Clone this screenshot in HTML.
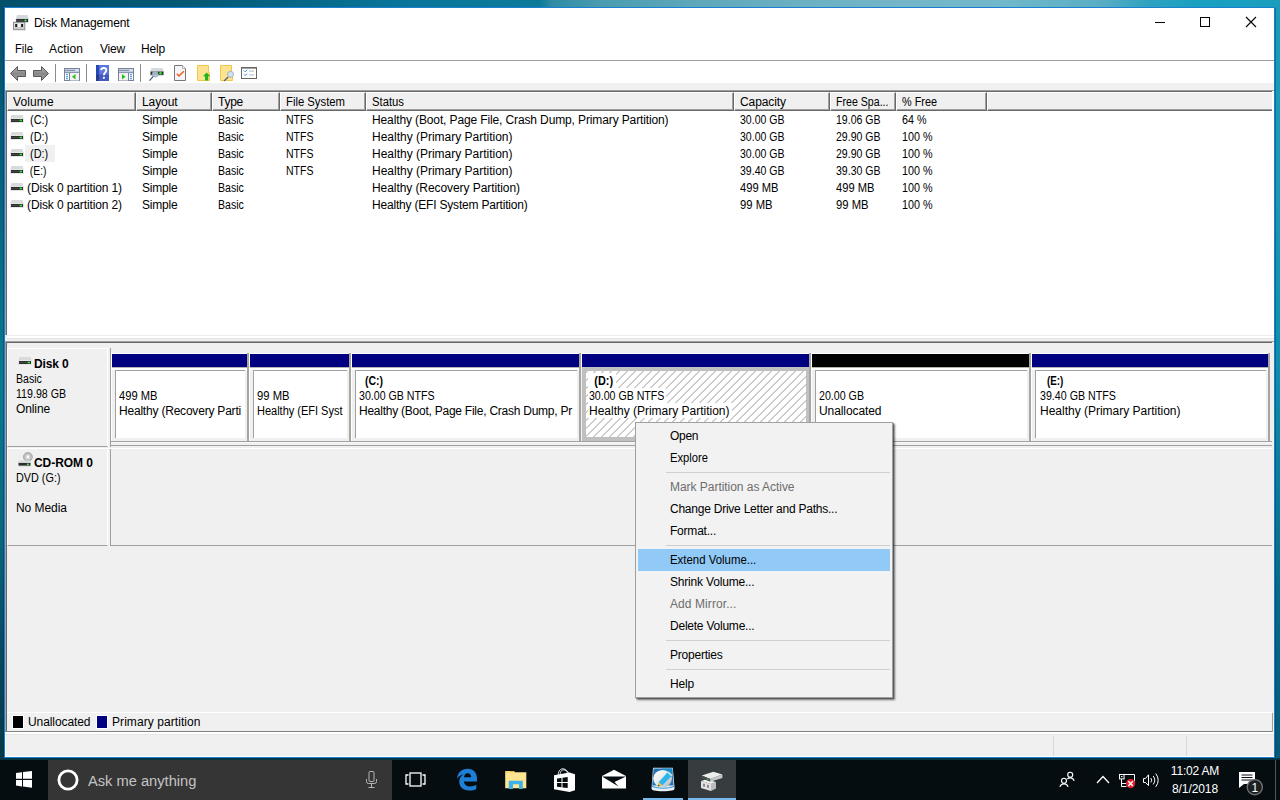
<!DOCTYPE html>
<html>
<head>
<meta charset="utf-8">
<title>Disk Management</title>
<style>
*{box-sizing:border-box;margin:0;padding:0}
html,body{width:1280px;height:800px;overflow:hidden}
body{font-family:"Liberation Sans",sans-serif;font-size:12px;color:#000;position:relative;background:#0a6a86}
.abs{position:absolute}
.t{position:absolute;white-space:nowrap;line-height:17px;height:17px}
#desk{position:absolute;left:0;top:0;width:1280px;height:760px;background:#033642}
#dtop{position:absolute;left:0;top:0;width:1280px;height:8px;background:linear-gradient(90deg,#04506b 0.00%,#055a76 15.62%,#08769a 31.25%,#0a7c9a 42.19%,#2e8ca4 43.12%,#4b9cb0 46.88%,#5ea8ba 54.69%,#6cb0c2 62.50%,#74b6c8 70.31%,#72b8ca 78.12%,#5aaec4 85.94%,#2ea2c0 89.84%,#18a0c0 93.75%,#1a9ebe 100.00%)}
#dleft{position:absolute;left:0;top:7px;width:5px;height:751px;background:linear-gradient(180deg,#05506b 0%,#05607f 20%,#0a7a92 50%,#08687f 70%,#064a66 85%,#043a48 100%)}
#dright{position:absolute;left:1274px;top:7px;width:6px;height:751px;background:linear-gradient(180deg,#1c9cb8 0%,#1a98b5 25%,#1090b0 45%,#0a7a9a 65%,#066888 80%,#045a78 100%)}
#win{position:absolute;left:4px;top:7px;width:1271px;height:751px;background:#fff;border:1px solid #1a7fd0;overflow:hidden}
/* coordinates inside #win are page coords minus (5,8) -> use wrapper */
#w{position:absolute;left:-5px;top:-8px;width:1280px;height:800px}
#menuline{left:5px;top:60px;width:1269px;height:1px;background:#a0a0a0}
#body{left:5px;top:83px;width:1269px;height:674px;background:#f0f0f0}
/* list */
#list{left:5px;top:90px;width:1269px;height:245px;background:#fff;border-top:1px solid #a0a0a0;border-left:1px solid #a0a0a0}
#list2{left:6px;top:91px;width:1266px;height:244px;border-top:1px solid #696969;border-left:1px solid #696969}
.hd{position:absolute;top:92px;height:19px;background:#f0f0f0;border-top:1px solid #fff;border-left:1px solid #fff;border-right:1px solid #696969;border-bottom:1px solid #696969}
.hd i{position:absolute;right:0;bottom:0;left:0;top:0;border-right:1px solid #a0a0a0;border-bottom:1px solid #a0a0a0}
.hd span{position:absolute;left:5px;top:1px;line-height:17px;white-space:nowrap}

/* graphic pane */
#gp{left:5px;top:341px;width:1269px;height:391px;background:#f0f0f0;border-top:1px solid #a0a0a0;border-left:1px solid #a0a0a0}
#gp2{left:6px;top:342px;width:1266px;height:390px;border-top:1px solid #696969;border-left:1px solid #696969}
.lbl{position:absolute;left:7px;width:101px;background:#f0f0f0;border-top:1px solid #fff;border-left:1px solid #fff;border-right:1px solid #fff;border-bottom:1px solid #a0a0a0}
.b{font-weight:bold}
.pb{position:absolute;top:354px;height:13px;background:#000080;box-shadow:-1px -1px 0 0 #fff}
.pc{position:absolute;top:367px;height:74px;background:#f0f0f0;border-top:1px solid #b4b4ac;box-shadow:-1px 0 0 0 #fff}
.pc:before{content:"";position:absolute;left:0;right:0;top:0;height:2px;background:#fff}
.pc i{position:absolute;left:3px;top:2px;right:2px;bottom:3px;background:#fff;border-top:1px solid #a0a0a0;border-left:1px solid #a0a0a0}
.pv{position:absolute;top:353px;width:2px;height:88px;background:#a6a69e}

/* context menu */
#cm{position:absolute;left:635px;top:422px;width:258px;height:276px;background:#f2f2f2;border:1px solid #a0a0a0;box-shadow:2px 2px 2px rgba(0,0,0,.5),1px 1px 1px rgba(0,0,0,.3)}
.mi{position:absolute;left:670px;white-space:nowrap;height:22px;line-height:22px}
.mi.d{color:#6d6d6d}
.ms{position:absolute;left:666px;width:224px;height:1px;background:#d0d0d0}
#mh{position:absolute;left:638px;top:549px;width:252px;height:22px;background:#91c9f7}
/* taskbar */
#gfx .t{margin-top:1px}
#task .tx{position:absolute;color:#fff;white-space:nowrap;font-size:12px;line-height:14px}

#task{left:0;top:760px;width:1280px;height:40px;background:#050d11}
</style>
</head>
<body>
<svg width="0" height="0" style="position:absolute">
<defs>
<g id="dk"><path d="M1.5 0H12.5L13.5 3.5H0.5Z" fill="#d9dadb"/><rect x="0" y="3" width="14" height="5" fill="#e4e5e6"/><rect x="1" y="4" width="12" height="3" fill="#2e2e2e"/><rect x="1" y="5" width="8" height="1" fill="#444"/><rect x="9.6" y="4.6" width="2.4" height="1.8" fill="#2fe02f"/></g>
</defs></svg>
<div id="desk"><div id="dtop"></div><div id="dleft"></div><div id="dright"></div><div class="abs" style="left:1275px;top:8px;width:1px;height:750px;background:rgba(0,40,60,.35)"></div><div class="abs" style="left:3px;top:8px;width:1px;height:750px;background:rgba(0,30,50,.3)"></div></div>
<div id="win"><div id="w">


<!-- title icon -->
<svg class="abs" style="left:13px;top:15px" width="16" height="16" viewBox="0 0 16 16"><path d="M4 0H14.5L15.5 4H3Z" fill="#d3d8dd"/><rect x="2.7" y="3.6" width="12.8" height="4" fill="#c4c8cc"/><rect x="3.2" y="4" width="11.8" height="3" fill="#2a2c2e"/><rect x="3.2" y="5" width="7" height="1" fill="#484a4c"/><circle cx="12.5" cy="5.5" r="1.1" fill="#4cff4c"/><rect x="0.5" y="7.3" width="11.3" height="7.4" fill="#dedfe0" stroke="#8c8c8c" stroke-width="1"/><rect x="1.5" y="12" width="9.3" height="2" fill="#c8c9ca"/><rect x="2.2" y="9" width="2" height="3" fill="#1c1c1c"/><rect x="8.1" y="9" width="2" height="3" fill="#1c1c1c"/><rect x="5" y="9" width="2.2" height="3" fill="#f4f4f4"/></svg>
<!-- window controls -->
<svg class="abs" style="left:1150px;top:8px" width="120" height="30" viewBox="0 0 120 30" shape-rendering="crispEdges"><path d="M5 14.5H15" stroke="#000" stroke-width="1"/><rect x="50.5" y="9.5" width="9" height="9" fill="none" stroke="#000" stroke-width="1"/><path d="M96 9L106 19M106 9L96 19" stroke="#000" stroke-width="1.1" shape-rendering="auto"/></svg>
<!-- toolbar -->
<svg class="abs" style="left:5px;top:61px" width="260" height="22" viewBox="0 0 260 22">
<defs><linearGradient id="ag" x1="0" y1="0" x2="0" y2="1"><stop offset="0" stop-color="#b4b4b4"/><stop offset=".5" stop-color="#8a8a8a"/><stop offset="1" stop-color="#9c9c9c"/></linearGradient></defs>
<path d="M5.5 12.5L12.5 5.5V9.5H20.5V15.5H12.5V19.5Z" fill="url(#ag)" stroke="#585858" stroke-width="1" stroke-linejoin="round"/>
<path d="M43.5 12.5L36.5 5.5V9.5H28.5V15.5H36.5V19.5Z" fill="url(#ag)" stroke="#585858" stroke-width="1" stroke-linejoin="round"/>
<rect x="50" y="3" width="1" height="18" fill="#8c8c8c"/>
<rect x="81" y="3" width="1" height="18" fill="#8c8c8c"/>
<rect x="135" y="3" width="1" height="18" fill="#8c8c8c"/>
<!-- icon3 -->
<g transform="translate(59,7)"><rect x=".5" y=".5" width="15" height="12" fill="#fff" stroke="#76849c"/><rect x="1" y="1" width="14" height="3.4" fill="#c3cddd"/><rect x="1" y="2" width="10" height="1" fill="#8794ab"/><rect x="11.7" y="1.4" width="1" height="1.2" fill="#fff"/><rect x="13.5" y="1.4" width="1" height="1.2" fill="#fff"/><rect x="1" y="4.2" width="14" height="1" fill="#76849c"/><rect x="5" y="5" width="1" height="7.5" fill="#76849c"/><rect x="2" y="6.2" width="2" height="1" fill="#2f8be6"/><rect x="2" y="8.2" width="2" height="1" fill="#2f8be6"/><rect x="2" y="10.2" width="2" height="1" fill="#2f8be6"/><rect x="6" y="5.2" width="9" height="7.3" fill="#f2f2f2"/><path d="M11.5 6L8 8.8L11.5 11.6Z" fill="#2dbb1e"/></g>
<!-- help -->
<g transform="translate(91,4)"><rect x="0" y="0" width="13" height="16" fill="#5a76e0"/><rect x="0" y="0" width="3" height="16" fill="#2b48b8"/><rect x="0" y="9.5" width="13" height="6.5" fill="#3c52b4" opacity=".75"/><rect x="0" y="9.5" width="3" height="6.5" fill="#263c8c"/><path d="M5.2 5.2C5.2 2.2 10.3 2.2 10.3 5.2C10.3 7.2 7.9 7.5 7.9 10.2" fill="none" stroke="#fff" stroke-width="1.9"/><circle cx="7.9" cy="12.8" r="1.15" fill="#fff"/></g>
<!-- icon5 -->
<g transform="translate(113,7)"><rect x=".5" y=".5" width="15" height="12" fill="#fff" stroke="#76849c"/><rect x="1" y="1" width="14" height="3.4" fill="#c3cddd"/><rect x="1" y="2" width="10" height="1" fill="#8794ab"/><rect x="11.7" y="1.4" width="1" height="1.2" fill="#fff"/><rect x="13.5" y="1.4" width="1" height="1.2" fill="#fff"/><rect x="1" y="4.2" width="14" height="1" fill="#76849c"/><rect x="10" y="5" width="1" height="7.5" fill="#76849c"/><rect x="12" y="6.2" width="2" height="1" fill="#2f8be6"/><rect x="12" y="8.2" width="2" height="1" fill="#2f8be6"/><rect x="12" y="10.2" width="2" height="1" fill="#2f8be6"/><rect x="1" y="5.2" width="9" height="7.3" fill="#f2f2f2"/><path d="M4 6L7.5 8.8L4 11.6Z" fill="#2dbb1e"/></g>
<!-- icon6 disk+magnifier -->
<g transform="translate(144,7)"><path d="M2.5 0H13.5L14.5 3H1.5Z" fill="#d6dadd"/><rect x="1" y="2.8" width="14" height="5" fill="#d0d3d6"/><rect x="1.6" y="3.6" width="12.8" height="3.2" fill="#2a2c2e"/><rect x="10" y="4.5" width="3" height="1.4" fill="#2ee62e"/><rect x="11" y="3.9" width="1" height="2.6" fill="#2ee62e"/><circle cx="6.2" cy="6.2" r="2.9" fill="#aac4d4" fill-opacity=".9" stroke="#9aa8b2" stroke-width=".8"/><path d="M4.3 8.3L.5 12.6" stroke="#4a5878" stroke-width="1.2"/></g>
<!-- icon7 doc check -->
<g transform="translate(169,4)"><path d="M.5 .5H8.5L11.5 3.5V15.5H.5Z" fill="#f5f6fa" stroke="#787878"/><path d="M8.5 .5V3.5H11.5" fill="#fff" stroke="#9a9a9a" stroke-width=".8"/><path d="M2.8 8.8L5 11L9.8 6.2" fill="none" stroke="#f05a1e" stroke-width="1.5"/></g>
<!-- icon8 folder up -->
<g transform="translate(192,4)"><path d="M.5 .5H11.5V8H12.5V15.5H.5Z" fill="#fde291" stroke="#f1c84c"/><path d="M9.6 7.5L13.2 11.2H11.2V15.6H8V11.2H6Z" fill="#1fb51f"/></g>
<!-- icon9 folder search -->
<g transform="translate(215,4)"><path d="M.5 .5H11.5V8H12.5V15.5H.5Z" fill="#fde291" stroke="#f1c84c"/><path d="M8.2 12L4 16" stroke="#55607a" stroke-width="1.3"/><circle cx="10.5" cy="9.3" r="3" fill="#cfe2ee" stroke="#a0acb6" stroke-width=".9"/></g>
<!-- icon10 checklist -->
<g transform="translate(236,6)"><rect x=".5" y=".5" width="15" height="11" fill="#fff" stroke="#666"/><rect x="0" y="0" width="16" height="1.6" fill="#666"/><path d="M3 3.6L4.2 4.8L6 2.8M3 7.4L4.2 8.6L6 6.6" fill="none" stroke="#2f8be6" stroke-width="1"/><rect x="8" y="3.6" width="5" height="1" fill="#b4b8be"/><rect x="8" y="7.4" width="5" height="1" fill="#b4b8be"/></g>
</svg>
<!-- title -->
<div class="t" style="letter-spacing:-0.075px;left:34px;top:15px">Disk Management</div>
<!-- menu -->
<div class="t" style="transform:scaleX(0.9254);transform-origin:0 0;left:15px;top:41px">File</div>
<div class="t" style="letter-spacing:0.123px;left:49px;top:41px">Action</div>
<div class="t" style="letter-spacing:-0.199px;left:100px;top:41px">View</div>
<div class="t" style="letter-spacing:-0.147px;left:141px;top:41px">Help</div>
<div class="abs" id="menuline"></div>
<div class="abs" id="body"></div>

<!-- list -->
<div class="abs" id="list"></div>
<div class="abs" id="list2"></div>
<div class="abs" style="left:7px;top:335px;width:1267px;height:1px;background:#ececec"></div>
<div class="abs" style="left:7px;top:336px;width:1267px;height:2px;background:#fff"></div>
<div class="abs" style="left:7px;top:338px;width:1267px;height:1px;background:#e3e3e3"></div>
<div class="abs" style="left:7px;top:343px;width:1265px;height:1px;background:#fff"></div>
<div id="hdrs">
<div class="hd" style="left:7px;width:129px"><i></i><span style="letter-spacing:0.12px;">Volume</span></div>
<div class="hd" style="left:136px;width:76px"><i></i><span style="letter-spacing:-0.089px;">Layout</span></div>
<div class="hd" style="left:212px;width:68px"><i></i><span style="letter-spacing:-0.254px;">Type</span></div>
<div class="hd" style="left:280px;width:86px"><i></i><span style="transform:scaleX(0.9412);transform-origin:0 0;">File System</span></div>
<div class="hd" style="left:366px;width:368px"><i></i><span style="transform:scaleX(0.9403);transform-origin:0 0;">Status</span></div>
<div class="hd" style="left:734px;width:96px"><i></i><span style="letter-spacing:-0.086px;">Capacity</span></div>
<div class="hd" style="left:830px;width:66px"><i></i><span style="transform:scaleX(0.8842);transform-origin:0 0;">Free Spa...</span></div>
<div class="hd" style="left:896px;width:91px"><i></i><span style="transform:scaleX(0.9047);transform-origin:0 0;">% Free</span></div>
<div class="hd" style="left:987px;width:285px;border-right:none"><i style="border-right:none"></i></div>
</div>
<div id="rows">
<svg class="abs dk" style="left:10px;top:115px" width="14" height="8" viewBox="0 0 14 8"><use href="#dk"/></svg>
<div class="t" style="transform:scaleX(0.9088);transform-origin:0 0;left:27px;top:112px">&nbsp;(C:)</div>
<div class="t" style="letter-spacing:-0.198px;left:142px;top:112px">Simple</div>
<div class="t" style="transform:scaleX(0.8775);transform-origin:0 0;left:218px;top:112px">Basic</div>
<div class="t" style="transform:scaleX(0.8774);transform-origin:0 0;left:286px;top:112px">NTFS</div>
<div class="t" style="letter-spacing:-0.124px;left:372px;top:112px">Healthy (Boot, Page File, Crash Dump, Primary Partition)</div>
<div class="t" style="transform:scaleX(0.8777);transform-origin:0 0;left:740px;top:112px">30.00 GB</div>
<div class="t" style="transform:scaleX(0.8777);transform-origin:0 0;left:836px;top:112px">19.06 GB</div>
<div class="t" style="transform:scaleX(0.8955);transform-origin:0 0;left:902px;top:112px">64 %</div>
<svg class="abs dk" style="left:10px;top:132px" width="14" height="8" viewBox="0 0 14 8"><use href="#dk"/></svg>
<div class="t" style="transform:scaleX(0.9088);transform-origin:0 0;left:27px;top:129px">&nbsp;(D:)</div>
<div class="t" style="letter-spacing:-0.198px;left:142px;top:129px">Simple</div>
<div class="t" style="transform:scaleX(0.8775);transform-origin:0 0;left:218px;top:129px">Basic</div>
<div class="t" style="transform:scaleX(0.8774);transform-origin:0 0;left:286px;top:129px">NTFS</div>
<div class="t" style="letter-spacing:-0.008px;left:372px;top:129px">Healthy (Primary Partition)</div>
<div class="t" style="transform:scaleX(0.8777);transform-origin:0 0;left:740px;top:129px">30.00 GB</div>
<div class="t" style="transform:scaleX(0.8777);transform-origin:0 0;left:836px;top:129px">29.90 GB</div>
<div class="t" style="transform:scaleX(0.8962);transform-origin:0 0;left:902px;top:129px">100 %</div>
<div class="abs" style="left:25px;top:145px;width:30px;height:17px;background:#f0f0f0"></div>
<svg class="abs dk" style="left:10px;top:149px" width="14" height="8" viewBox="0 0 14 8"><use href="#dk"/></svg>
<div class="t" style="transform:scaleX(0.9088);transform-origin:0 0;left:27px;top:146px">&nbsp;(D:)</div>
<div class="t" style="letter-spacing:-0.198px;left:142px;top:146px">Simple</div>
<div class="t" style="transform:scaleX(0.8775);transform-origin:0 0;left:218px;top:146px">Basic</div>
<div class="t" style="transform:scaleX(0.8774);transform-origin:0 0;left:286px;top:146px">NTFS</div>
<div class="t" style="letter-spacing:-0.008px;left:372px;top:146px">Healthy (Primary Partition)</div>
<div class="t" style="transform:scaleX(0.8777);transform-origin:0 0;left:740px;top:146px">30.00 GB</div>
<div class="t" style="transform:scaleX(0.8777);transform-origin:0 0;left:836px;top:146px">29.90 GB</div>
<div class="t" style="transform:scaleX(0.8962);transform-origin:0 0;left:902px;top:146px">100 %</div>
<svg class="abs dk" style="left:10px;top:166px" width="14" height="8" viewBox="0 0 14 8"><use href="#dk"/></svg>
<div class="t" style="transform:scaleX(0.8601);transform-origin:0 0;left:27px;top:163px">&nbsp;(E:)</div>
<div class="t" style="letter-spacing:-0.198px;left:142px;top:163px">Simple</div>
<div class="t" style="transform:scaleX(0.8775);transform-origin:0 0;left:218px;top:163px">Basic</div>
<div class="t" style="transform:scaleX(0.8774);transform-origin:0 0;left:286px;top:163px">NTFS</div>
<div class="t" style="letter-spacing:-0.008px;left:372px;top:163px">Healthy (Primary Partition)</div>
<div class="t" style="transform:scaleX(0.8777);transform-origin:0 0;left:740px;top:163px">39.40 GB</div>
<div class="t" style="transform:scaleX(0.8777);transform-origin:0 0;left:836px;top:163px">39.30 GB</div>
<div class="t" style="transform:scaleX(0.8962);transform-origin:0 0;left:902px;top:163px">100 %</div>
<svg class="abs dk" style="left:10px;top:183px" width="14" height="8" viewBox="0 0 14 8"><use href="#dk"/></svg>
<div class="t" style="letter-spacing:-0.119px;left:27px;top:180px">(Disk 0 partition 1)</div>
<div class="t" style="letter-spacing:-0.198px;left:142px;top:180px">Simple</div>
<div class="t" style="transform:scaleX(0.8775);transform-origin:0 0;left:218px;top:180px">Basic</div>
<div class="t" style="letter-spacing:-0.074px;left:372px;top:180px">Healthy (Recovery Partition)</div>
<div class="t" style="transform:scaleX(0.9309);transform-origin:0 0;left:740px;top:180px">499 MB</div>
<div class="t" style="transform:scaleX(0.9309);transform-origin:0 0;left:836px;top:180px">499 MB</div>
<div class="t" style="transform:scaleX(0.8962);transform-origin:0 0;left:902px;top:180px">100 %</div>
<svg class="abs dk" style="left:10px;top:200px" width="14" height="8" viewBox="0 0 14 8"><use href="#dk"/></svg>
<div class="t" style="letter-spacing:-0.119px;left:27px;top:197px">(Disk 0 partition 2)</div>
<div class="t" style="letter-spacing:-0.198px;left:142px;top:197px">Simple</div>
<div class="t" style="transform:scaleX(0.8775);transform-origin:0 0;left:218px;top:197px">Basic</div>
<div class="t" style="letter-spacing:-0.196px;left:372px;top:197px">Healthy (EFI System Partition)</div>
<div class="t" style="transform:scaleX(0.9369);transform-origin:0 0;left:740px;top:197px">99 MB</div>
<div class="t" style="transform:scaleX(0.9369);transform-origin:0 0;left:836px;top:197px">99 MB</div>
<div class="t" style="transform:scaleX(0.8962);transform-origin:0 0;left:902px;top:197px">100 %</div>
</div>

<!-- graphic -->
<div id="gfx">
<div class="abs" id="gp"></div><div class="abs" id="gp2"></div>
<div class="lbl" style="top:348px;height:99px"></div>
<svg class="abs" style="left:18px;top:357px" width="14" height="8" viewBox="0 0 14 8"><use href="#dk"/></svg>
<div class="t b" style="letter-spacing:-0.143px;left:34px;top:355px">Disk 0</div>
<div class="t" style="transform:scaleX(0.8775);transform-origin:0 0;left:16px;top:370px">Basic</div>
<div class="t" style="transform:scaleX(0.8852);transform-origin:0 0;left:16px;top:385px">119.98 GB</div>
<div class="t" style="letter-spacing:-0.115px;left:16px;top:400px">Online</div>
<div class="abs" style="left:110px;top:348px;width:1px;height:99px;background:#a0a0a0"></div>
<div class="abs" style="left:110px;top:441px;width:1162px;height:1px;background:#a0a0a0"></div>
<div class="abs" style="left:111px;top:442px;width:1161px;height:1px;background:#f8f8f8"></div>
<div class="abs" style="left:110px;top:445px;width:1162px;height:1px;background:#a0a0a0"></div>
<div class="pb" style="left:112px;width:135px;background:#000080"></div><div class="pv" style="left:247px"></div>
<div class="pc" style="left:112px;width:135px"><i></i></div>
<div class="t" style="transform:scaleX(0.9309);transform-origin:0 0;left:119px;top:387px">499 MB</div>
<div class="t" style="letter-spacing:-0.205px;left:119px;top:402px">Healthy (Recovery Parti</div>
<div class="pb" style="left:250px;width:99px;background:#000080"></div><div class="pv" style="left:349px"></div>
<div class="pc" style="left:250px;width:99px"><i></i></div>
<div class="t" style="transform:scaleX(0.9369);transform-origin:0 0;left:257px;top:387px">99 MB</div>
<div class="t" style="transform:scaleX(0.9158);transform-origin:0 0;left:257px;top:402px">Healthy (EFI Syst</div>
<div class="pb" style="left:352px;width:227px;background:#000080"></div><div class="pv" style="left:579px"></div>
<div class="pc" style="left:352px;width:227px"><i></i></div>
<div class="t b" style="transform:scaleX(0.8714);transform-origin:0 0;left:365px;top:372px">(C:)</div>
<div class="t" style="transform:scaleX(0.8843);transform-origin:0 0;left:359px;top:387px">30.00 GB NTFS</div>
<div class="t" style="letter-spacing:-0.244px;left:359px;top:402px">Healthy (Boot, Page File, Crash Dump, Pr</div>
<div class="pb" style="left:582px;width:227px;background:#000080"></div><div class="pv" style="left:809px"></div>
<div class="abs" style="left:582px;top:367px;width:227px;height:74px;background:#c0c0c0"></div>
<svg class="abs" style="left:586px;top:371px" width="220" height="66"><defs><pattern id="ht" width="8" height="8" patternUnits="userSpaceOnUse" patternTransform="translate(1.5,0)"><rect width="8" height="8" fill="#fff"/><path d="M-1 9L9 -1M-1 1L1 -1M7 9L9 7" stroke="#858585" stroke-width=".85"/></pattern></defs><rect width="100%" height="100%" fill="url(#ht)"/></svg>
<div class="t b" style="transform:scaleX(0.9077);transform-origin:0 0;left:588px;top:372px;background:#fff;padding:0 3px 0 7px;height:15px;line-height:16px">(D:)</div>
<div class="t" style="transform:scaleX(0.8843);transform-origin:0 0;left:588px;top:387px;background:#fff;padding:0 2px 0 1px;height:15px;line-height:16px">30.00 GB NTFS</div>
<div class="t" style="letter-spacing:-0.008px;left:588px;top:402px;background:#fff;padding:0 2px 0 1px;height:15px;line-height:16px">Healthy (Primary Partition)</div>
<div class="pb" style="left:812px;width:217px;background:#000"></div><div class="pv" style="left:1029px"></div>
<div class="pc" style="left:812px;width:217px"><i></i></div>
<div class="t" style="transform:scaleX(0.8875);transform-origin:0 0;left:819px;top:387px">20.00 GB</div>
<div class="t" style="letter-spacing:-0.089px;left:819px;top:402px">Unallocated</div>
<div class="pb" style="left:1032px;width:236px;background:#000080"></div><div class="pv" style="left:1268px"></div>
<div class="pc" style="left:1032px;width:236px"><i></i></div>
<div class="t b" style="transform:scaleX(0.82);transform-origin:0 0;left:1047px;top:372px">(E:)</div>
<div class="t" style="transform:scaleX(0.889);transform-origin:0 0;left:1040px;top:387px">39.40 GB NTFS</div>
<div class="t" style="letter-spacing:-0.008px;left:1040px;top:402px">Healthy (Primary Partition)</div>
<div class="lbl" style="top:448px;height:98px"></div><div class="abs" style="left:110px;top:449px;width:1px;height:97px;background:#a0a0a0"></div>
<div class="abs" style="left:108px;top:448px;width:1164px;height:1px;background:#fff"></div>
<div class="abs" style="left:111px;top:545px;width:1161px;height:1px;background:#a0a0a0"></div>
<svg class="abs" style="left:17px;top:452px" width="16" height="16" viewBox="0 0 16 16"><circle cx="10.9" cy="4.9" r="4.5" fill="#bcbcbc" stroke="#a2a2a2" stroke-width=".8"/><circle cx="10.9" cy="4.9" r="2.6" fill="#d2d2d2"/><circle cx="10.9" cy="4.9" r="1.3" fill="#fff"/><path d="M2 8.5H13L14 10.5H1Z" fill="#d6dadd"/><rect x="1" y="10" width="13" height="4.5" fill="#d0d3d6"/><rect x="1.6" y="11" width="11.8" height="2.6" fill="#2a2c2e"/><rect x="9.8" y="11.6" width="2.2" height="1.4" fill="#2ee62e"/></svg>
<div class="t b" style="letter-spacing:-0.043px;left:34px;top:454px">CD-ROM 0</div>
<div class="t" style="transform:scaleX(0.9018);transform-origin:0 0;left:16px;top:469px">DVD (G:)</div>
<div class="t" style="letter-spacing:-0.045px;left:16px;top:499px">No Media</div>
</div>

<!-- legend/status -->
<div id="foot">
<div class="abs" style="left:5px;top:733px;width:1px;height:24px;background:#fff"></div>
<div class="abs" style="left:5px;top:756px;width:1269px;height:1px;background:#fff"></div>
<div class="abs" style="left:5px;top:734px;width:1269px;height:1px;background:#e6e6e6"></div>

<div class="abs" style="left:7px;top:712px;width:1265px;height:1px;background:#fff"></div>
<div class="abs" style="left:5px;top:731px;width:1268px;height:1px;background:#828282"></div>
<div class="abs" style="left:1272px;top:713px;width:1px;height:19px;background:#a0a0a0"></div>
<div class="abs" style="left:5px;top:732px;width:1269px;height:2px;background:#fff"></div>
<div class="abs" style="left:11.5px;top:715px;width:12.5px;height:14px;background:#000;border:1px solid #fff"></div>
<div class="t" style="letter-spacing:-0.089px;left:28px;top:714px">Unallocated</div>
<div class="abs" style="left:95.5px;top:715px;width:12.5px;height:14px;background:#000080;border:1px solid #fff"></div>
<div class="t" style="letter-spacing:0.067px;left:112px;top:714px">Primary partition</div>
<div class="abs" style="left:1053px;top:736px;width:1px;height:20px;background:#d7d7d7"></div>
<div class="abs" style="left:1186px;top:736px;width:1px;height:20px;background:#d7d7d7"></div>
</div>

<!-- context menu -->
<div id="ctx">
<div id="cm"></div><div id="mh"></div>
<div class="mi" style="letter-spacing:-0.315px;top:425px">Open</div>
<div class="mi" style="transform:scaleX(0.9315);transform-origin:0 0;top:447px">Explore</div>
<div class="mi d" style="letter-spacing:-0.037px;top:476px">Mark Partition as Active</div>
<div class="mi" style="letter-spacing:-0.234px;top:498px">Change Drive Letter and Paths...</div>
<div class="mi" style="letter-spacing:-0.213px;top:520px">Format...</div>
<div class="mi" style="transform:scaleX(0.9511);transform-origin:0 0;top:549px">Extend Volume...</div>
<div class="mi" style="letter-spacing:-0.186px;top:571px">Shrink Volume...</div>
<div class="mi d" style="letter-spacing:0.08px;top:593px">Add Mirror...</div>
<div class="mi" style="letter-spacing:-0.229px;top:615px">Delete Volume...</div>
<div class="mi" style="letter-spacing:-0.22px;top:644px">Properties</div>
<div class="mi" style="letter-spacing:-0.147px;top:673px">Help</div>
<div class="ms" style="top:472px"></div>
<div class="ms" style="top:545px"></div>
<div class="ms" style="top:640px"></div>
<div class="ms" style="top:669px"></div>
</div>

</div></div>
<div class="abs" id="task">
<div class="abs" style="left:48px;top:0;width:344px;height:40px;background:#353535"></div>
<svg class="abs" style="left:16px;top:11px" width="16" height="17" viewBox="0 0 16 17"><path d="M0 2L6 1.2V7.8H0ZM7 1.1L16 0V7.8H7ZM0 8.9H6V15.4L0 14.6ZM7 8.9H16V16.8L7 15.6Z" fill="#fff"/></svg>
<svg class="abs" style="left:57px;top:9px" width="22" height="22" viewBox="0 0 22 22"><circle cx="11" cy="11" r="9.1" fill="none" stroke="#fff" stroke-width="2.8"/></svg>
<div class="abs ask" style="transform:scaleX(0.946);transform-origin:0 0;left:88px;top:11px;font-size:15.5px;line-height:20px;color:#c4c4c4;white-space:nowrap">Ask me anything</div>
<svg class="abs" style="left:365px;top:11px" width="13" height="18" viewBox="0 0 13 18"><rect x="4" y="0.5" width="5" height="10" rx="1" fill="none" stroke="#b4b4b4" stroke-width="1"/><path d="M1.5 8v2.5a2 2 0 0 0 2 2h6a2 2 0 0 0 2-2V8M6.5 12.5v3.5M3.5 16.5h6" fill="none" stroke="#b4b4b4" stroke-width="1"/></svg>
<svg class="abs" style="left:405px;top:12px" width="22" height="15" viewBox="0 0 22 15"><rect x="5" y="1" width="11" height="13" fill="none" stroke="#fff" stroke-width="1.3"/><path d="M3.5 3H1V12H3.5M17.5 3H20V12H17.5" fill="none" stroke="#fff" stroke-width="1.3"/></svg>
<svg class="abs" style="left:456px;top:8px" width="22" height="23" viewBox="0 0 22 23"><path d="M1 11C1.5 4.5 6 .8 11.5 .8C17.5 .8 21 5 21 10.5V13.5H8C8.2 17 11 18.5 14 18.5C16.5 18.5 18.6 17.8 20.3 16.8V21C18.5 22 16.2 22.6 13.2 22.6C6.8 22.6 3.2 18.6 3.2 13.6C3.2 10.5 4.8 8 7.3 6.5C5.5 6.5 2.5 8 1 11ZM8 9.3H15.2C15.2 6.8 13.8 5.2 11.6 5.2C9.6 5.2 8.3 6.8 8 9.3Z" fill="#1e7fd8"/></svg>
<svg class="abs" style="left:505px;top:10px" width="22" height="20" viewBox="0 0 22 20"><path d="M.2 1H9L10 2.3H21.3V18.2H.2Z" fill="#ffe591"/><rect x=".2" y="1" width="8.9" height="1.3" fill="#e9b93e"/><rect x="1.8" y="1.2" width="3.4" height=".8" fill="#f6e6b0"/><path d="M3.75 19V10.75H17.8V19H14V14.3H8V19Z" fill="#3cb1ea"/></svg>
<svg class="abs" style="left:553px;top:8px" width="23" height="25" viewBox="0 0 23 25"><path d="M5.3 7C5.3 2.5 7.6 .8 9.8 .8C12.4 .8 14 2.6 14.4 5.2M7.2 6.6C7.2 3 9 1.8 10.6 1.8C12.6 1.8 14.6 3 15.6 4.8" fill="none" stroke="#fff" stroke-width=".9"/><path d="M1 7.3L16.5 4.6L22 6.3V22.2L16.5 24L1 21.2Z" fill="#fff"/><path d="M4 10.5L8.5 9.9V14H4ZM9.5 9.8L14.7 9.1V14H9.5ZM4 15H8.5V19.3L4 18.8ZM9.5 15H14.7V20.1L9.5 19.5Z" fill="#050d11"/></svg>
<svg class="abs" style="left:601px;top:9px" width="26" height="20" viewBox="0 0 26 20"><path d="M1 7L13 .8L25 7V19.5H1Z" fill="#fff"/><path d="M1 7.5L25 7.5L13.5 13L17.5 17.5Z" fill="#060e12"/></svg>
<!-- partition app -->
<svg class="abs" style="left:650px;top:7px" width="26" height="25" viewBox="0 0 26 25"><defs><linearGradient id="dg" x1="0" y1="0" x2="1" y2="1"><stop offset="0" stop-color="#fff"/><stop offset=".55" stop-color="#e4e6e8"/><stop offset="1" stop-color="#a8acb0"/></linearGradient></defs><path d="M3 .8H22.8L24.6 21.5C24.6 23.2 21 24.3 13 24.3C5 24.3 1.5 23.2 1.5 21.5Z" fill="#e9eef2"/><path d="M3.6 1.4H22.2L23.6 18.5H2.2Z" fill="#2272b6"/><path d="M12 1.4H22.2L22.6 6H14Z" fill="#1a8cc8"/><ellipse cx="12.6" cy="11.6" rx="9.4" ry="8.6" fill="url(#dg)"/><path d="M8.6 15.2L17.4 5.6L21.4 9.2L12.4 18.6Z" fill="#2cb6ea"/><path d="M17.4 5.6L18.6 4.4L22.6 8L21.4 9.2Z" fill="#bfe6f6"/><path d="M8.6 15.2L12.4 18.6L7.4 19.6Z" fill="#e6c84a"/><path d="M7.4 19.6L9 17.6L9.6 19.1Z" fill="#333"/><path d="M2 19.5Q13 23 24.2 19.5" fill="none" stroke="#2a9ad6" stroke-width="1"/></svg>
<div class="abs" style="left:643px;top:38px;width:40px;height:2px;background:#76b9ed"></div>
<div class="abs" style="left:688px;top:0;width:48px;height:38px;background:#373d3f"></div>
<div class="abs" style="left:688px;top:38px;width:48px;height:2px;background:#76b9ed"></div>
<svg class="abs" style="left:700px;top:11px" width="24" height="21" viewBox="0 0 24 21"><path d="M1 10L11 13V19.9L1 17Z" fill="#e2e2e2"/><path d="M11 13L16 11V17.6L11 19.9Z" fill="#bdbdbd"/><path d="M1 10L6 8.4L16 11L11 13Z" fill="#f0f0f0"/><path d="M3 12.4L5 13V16L3 15.4ZM7 13.6L9 14.2V17.2L7 16.6Z" fill="#8a8a8a"/><path d="M1.7 4.6L13.4 .7L22.4 3.5L10.3 8.1Z" fill="#ececec"/><path d="M1.7 4.6L10.3 8.1V10.8L1.7 7.6Z" fill="#4a4c4e"/><path d="M10.3 8.1L22.4 3.5V7L10.3 10.8Z" fill="#c6c6c6"/><path d="M6.8 7.4L8.6 8.1V8.9L6.8 8.2Z" fill="#3ad03a"/></svg>
<!-- tray -->
<svg class="abs" style="left:1059px;top:11px" width="18" height="18" viewBox="0 0 18 18"><circle cx="11.2" cy="3.7" r="2.5" fill="none" stroke="#fff" stroke-width="1.15"/><path d="M15 10C14.6 7.6 12.9 6.9 11.2 6.9C10 6.9 9 7.3 8.3 8" fill="none" stroke="#fff" stroke-width="1.15"/><circle cx="5" cy="9.7" r="2.5" fill="none" stroke="#fff" stroke-width="1.15"/><path d="M1 16C1.5 13.6 3 12.9 5 12.9C7 12.9 8.5 13.6 9 16" fill="none" stroke="#fff" stroke-width="1.15"/></svg>
<svg class="abs" style="left:1096px;top:15px" width="14" height="9" viewBox="0 0 14 9"><path d="M1 8L7 1.5L13 8" fill="none" stroke="#fff" stroke-width="1.3"/></svg>
<svg class="abs" style="left:1118px;top:13px" width="20" height="16" viewBox="0 0 20 16"><path d="M1.5 6V1.5H16.5V8.5" fill="none" stroke="#fff" stroke-width="1"/><rect x="1.5" y="1.5" width="4.6" height="4.4" fill="none" stroke="#fff" stroke-width="1"/><rect x="3.1" y="3" width="1.4" height="1.2" fill="#fff"/><path d="M3.5 6V13.5H8.4M3.5 10.5H9" fill="none" stroke="#fff" stroke-width="1"/><circle cx="12.6" cy="10.6" r="4.6" fill="#e5202e"/><path d="M10.3 8.3L14.9 12.9M14.9 8.3L10.3 12.9" stroke="#fff" stroke-width="1.4"/></svg>
<svg class="abs" style="left:1142px;top:12px" width="20" height="17" viewBox="0 0 20 17"><path d="M1.5 6.5H3.5L6.5 2.8V13.6L3.5 10.5H1.5Z" fill="none" stroke="#fff" stroke-width="1"/><path d="M8.8 6Q10.6 8.2 8.8 10.4M11.2 4Q14.4 8.2 11.2 12.4M13.8 1.6Q18.6 8.2 13.8 14.8" fill="none" stroke="#fff" stroke-width="1"/></svg>
<div class="tx" style="letter-spacing:-0.189px;left:1170px;top:4px;width:50px;text-align:center;">11:02 AM</div>
<div class="tx" style="letter-spacing:-0.09px;left:1170px;top:22px;width:50px;text-align:center;">8/1/2018</div>
<svg class="abs" style="left:1238px;top:11px" width="28" height="26" viewBox="0 0 28 26"><path d="M1 1H17V13H6L1 17Z" fill="#fff"/><path d="M3.5 4H14.5M3.5 6.5H14.5M3.5 9H14.5" stroke="#060e12" stroke-width="1"/><circle cx="16.8" cy="16.2" r="7.6" fill="#1c1f21" stroke="#6e7274" stroke-width="1.4"/><text x="16.8" y="20.6" font-family="Liberation Sans" font-size="12" fill="#fff" text-anchor="middle">1</text></svg>
<div class="abs" style="left:1275px;top:0;width:1px;height:40px;background:#50585c"></div>
</div>
</body>
</html>
